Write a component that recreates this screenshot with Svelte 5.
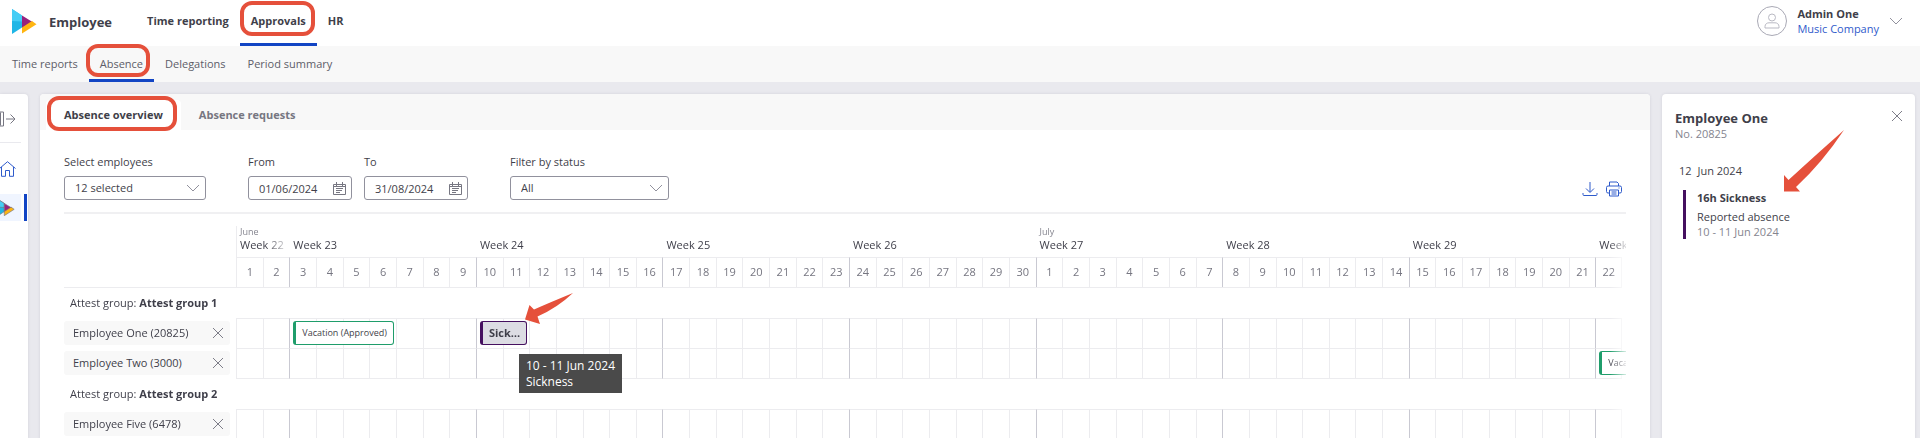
<script lang="ts">
	type Absence = { start: number; days: number; label: string; kind: string; tip?: string[] };
	type Employee = { name: string; absences: Absence[] };

	const mainNav = ['Time reporting', 'Approvals', 'HR'];
	const subNav = ['Time reports', 'Absence', 'Delegations', 'Period summary'];
	const tabs = ['Absence overview', 'Absence requests'];

	const weeks = [
		{ number: 22, days: 2, month: 'June' },
		{ number: 23, days: 7 },
		{ number: 24, days: 7 },
		{ number: 25, days: 7 },
		{ number: 26, days: 7 },
		{ number: 27, days: 7, month: 'July' },
		{ number: 28, days: 7 },
		{ number: 29, days: 7 },
		{ number: 30, days: 1 }
	];

	// 1 June to 22 July, 1 June is a Saturday
	const days = Array.from({ length: 52 }, (_, i) => ({
		index: i,
		date: i < 30 ? i + 1 : i - 29,
		monday: i % 7 === 2
	}));

	const groups: { name: string; employees: Employee[] }[] = [
		{
			name: 'Attest group 1',
			employees: [
				{
					name: 'Employee One (20825)',
					absences: [
						{ start: 2, days: 4, label: 'Vacation (Approved)', kind: 'vacation' },
						{ start: 9, days: 2, label: 'Sickness', kind: 'sickness', tip: ['10 - 11 Jun 2024', 'Sickness'] }
					]
				},
				{
					name: 'Employee Two (3000)',
					absences: [{ start: 51, days: 4, label: 'Vacation (Approved)', kind: 'vacation' }]
				}
			]
		},
		{
			name: 'Attest group 2',
			employees: [{ name: 'Employee Five (6478)', absences: [] }]
		}
	];
</script>

{#snippet logo()}
	<svg class="logo" viewBox="0 0 25 25" aria-hidden="true">
		<path d="M0 0l10 6.500v12L0 25z" fill="#1fb6e6" />
		<path d="M0 0l10 6.500v6L0 12z" fill="#45cdf5" />
		<path d="M10 6.500l10.500 6.500L10 19.500z" fill="#96227d" />
		<path d="M20 12l4.500 3.200L10 24.500v-6z" fill="#ffb511" />
	</svg>
{/snippet}

{#snippet chevron()}
	<svg class="chevron" viewBox="0 0 14 8" aria-hidden="true"><path d="M1 1l6 6 6-6" /></svg>
{/snippet}

{#snippet cross()}
	<svg class="cross" viewBox="0 0 12 12" aria-hidden="true"><path d="M1 1l10 10M11 1L1 11" /></svg>
{/snippet}

{#snippet calendar()}
	<svg class="calendar" viewBox="0 0 13 13" aria-hidden="true">
		<path d="M.5 2.500h12v10H.5zM.5 4.500h12M3.500 0v4M9.500 0v4" />
		<path d="M3 6.500h7M3 8.500h6M3 10.500h4" />
	</svg>
{/snippet}

<div class="app">
	<header class="topbar">
		{@render logo()}
		<span class="brand">Employee</span>
		<nav class="main-nav">
			{#each mainNav as item}
				<a href="#top" class:active={item === 'Approvals'}>
					{item}
					{#if item === 'Approvals'}<span class="marker"></span>{/if}
				</a>
			{/each}
		</nav>
		<button class="user">
			<span class="avatar">
				<svg viewBox="0 0 16 16" aria-hidden="true">
					<circle cx="8" cy="4.500" r="3.500" />
					<path d="M1 15v-1.500C1 11 3 9.800 5 9.800h6c2 0 4 1.200 4 3.700V15z" />
				</svg>
			</span>
			<span class="user-text">
				<strong>Admin One</strong>
				<span>Music Company</span>
			</span>
			{@render chevron()}
		</button>
	</header>

	<nav class="sub-nav">
		{#each subNav as item}
			<a href="#sub" class:active={item === 'Absence'}>
				{item}
				{#if item === 'Absence'}<span class="marker"></span>{/if}
			</a>
		{/each}
	</nav>

	<div class="layout">
		<aside class="rail">
			<button class="expand" aria-label="Expand menu">
				<svg viewBox="0 0 16 15" aria-hidden="true">
					<path d="M-3 .5h6.500v14H-3zM6 7.500h9M10.500 3l4.500 4.500-4.500 4.500" />
					<path d="M.5 1v13" />
				</svg>
			</button>
			<a href="#home" class="home" aria-label="Home">
				<svg viewBox="0 0 16 16" aria-hidden="true">
					<path d="M-.5 7.500L7.500.700l8 6.800M1.500 6v9.300h4V9.500h4v5.800h4V6" />
				</svg>
			</a>
			<a href="#employee" class="current" aria-label="Employee">{@render logo()}</a>
		</aside>

		<main class="panel">
			<div class="tabs">
				{#each tabs as tab, i}
					<button class:active={i === 0}>
						{tab}
						{#if i === 0}<span class="marker"></span>{/if}
					</button>
				{/each}
			</div>

			<div class="content">
				<div class="filters">
					<div class="field employees">
						<label for="employees">Select employees</label>
						<div class="control">
							<select id="employees"><option>12 selected</option></select>
							{@render chevron()}
						</div>
					</div>
					<div class="field date">
						<label for="from">From</label>
						<div class="control">
							<input id="from" type="text" value="01/06/2024" />
							{@render calendar()}
						</div>
					</div>
					<div class="field date to">
						<label for="to">To</label>
						<div class="control">
							<input id="to" type="text" value="31/08/2024" />
							{@render calendar()}
						</div>
					</div>
					<div class="field status">
						<label for="status">Filter by status</label>
						<div class="control">
							<select id="status"><option>All</option></select>
							{@render chevron()}
						</div>
					</div>
					<div class="actions">
						<button aria-label="Download">
							<svg viewBox="0 0 16 16" aria-hidden="true">
								<path d="M8 1v10M4 7.500l4 4 4-4M1 12v1.500q0 1 1 1h12q1 0 1-1V12" />
							</svg>
						</button>
						<button aria-label="Print">
							<svg viewBox="0 0 16 16" aria-hidden="true">
								<path d="M3.500 5V1h7.500l1.500 1.500V5M3.500 12H2q-1.500 0-1.500-1.500v-4Q.5 5 2 5h12q1.500 0 1.500 1.500v4Q15.500 12 14 12h-1.500M3.500 9h9v6h-9zM5.500 11h5M5.500 13h5M12.500 7h1" />
							</svg>
						</button>
					</div>
				</div>

				<table class="schedule">
					<thead>
						<tr class="weeks">
							<td></td>
							{#each weeks as week}
								<th scope="colgroup" colspan={week.days} style:grid-column="span {week.days}">
									<span class="month">{week.month ?? ''}</span>
									<span class="week" class:fade={week.days === 2}>Week {week.number}</span>
								</th>
							{/each}
						</tr>
						<tr class="dates">
							<td></td>
							{#each days as day}
								<th scope="col" class:monday={day.monday}>{day.date}</th>
							{/each}
						</tr>
					</thead>
					{#each groups as group}
						<tbody>
							<tr class="group">
								<th colspan="53">Attest group: <strong>{group.name}</strong></th>
							</tr>
							{#each group.employees as employee}
								<tr class="employee">
									<th scope="row">
										<span class="chip">
											{employee.name}
											<button aria-label="Remove {employee.name}">{@render cross()}</button>
										</span>
									</th>
									{#each days as day}
										<td class:monday={day.monday}>
											{#each employee.absences.filter((a) => a.start === day.index) as absence}
												<div class="absence {absence.kind}" style:--days={absence.days}>
													<button>{absence.label}</button>
													{#if absence.tip}
														<div class="tooltip" role="tooltip">
															{#each absence.tip as line}<div>{line}</div>{/each}
														</div>
														<svg class="pointer" viewBox="0 0 48 31" aria-hidden="true">
															<path d="M0 26.500L4.500 12 9 16.500Q26 9 48 0 32 15 12.500 23.500l2.500 7.500z" />
														</svg>
													{/if}
												</div>
											{/each}
										</td>
									{/each}
								</tr>
							{/each}
						</tbody>
					{/each}
				</table>
			</div>
		</main>

		<aside class="details">
			<div class="details-head">
				<div>
					<h2>Employee One</h2>
					<p class="muted">No. 20825</p>
				</div>
				<button aria-label="Close">{@render cross()}</button>
			</div>
			<h3><span>12</span> <span>Jun 2024</span></h3>
			<div class="entry">
				<strong>16h Sickness</strong>
				<p>Reported absence</p>
				<p class="muted">10 - 11 Jun 2024</p>
				<svg class="pointer" viewBox="0 0 60 62" aria-hidden="true">
					<path d="M0 61.500V45l4.500 5Q34 23 60 0 38 33 12 57l4 4.500z" />
				</svg>
			</div>
		</aside>
	</div>
</div>

<style>
	:global(body) {
		background: #e9e9ee;
		color: #3f3f4a;
		font: 11px/16px 'Open Sans', 'Noto Sans', sans-serif;
	}

	.app {
		min-height: 100vh;
		display: flex;
		flex-direction: column;
	}

	a {
		color: inherit;
		text-decoration: none;
	}

	button {
		padding: 0;
		border: 0;
		background: none;
		color: inherit;
		font: inherit;
		cursor: pointer;
	}

	h2,
	h3,
	p {
		margin: 0;
	}

	svg {
		display: block;
		flex: none;
		fill: none;
	}

	.logo {
		width: 25px;
		height: 25px;
	}

	.chevron {
		width: 14px;
		height: 8px;
		stroke: #91919d;
	}

	.cross {
		width: 12px;
		height: 12px;
		stroke: #7d7d88;
	}

	.marker {
		position: absolute;
		border: 4px solid #e5503b;
		border-radius: 12px;
		pointer-events: none;
	}

	.pointer {
		position: absolute;
		fill: #e5503b;
		z-index: 2;
	}

	.topbar {
		display: flex;
		align-items: center;
		height: 46px;
		padding: 0 17px 0 12px;
		background: #fff;
	}

	.topbar > .logo {
		margin-bottom: 4px;
	}

	.brand {
		margin: 0 24px 0 12px;
		padding-bottom: 2px;
		font-size: 13px;
		font-weight: 700;
	}

	.main-nav {
		display: flex;
		flex: 1;
		align-self: stretch;
		font-weight: 700;
	}

	.main-nav a {
		position: relative;
		padding: 13px 11px;
		border-bottom: 3px solid transparent;
	}

	.main-nav a.active,
	.sub-nav a.active {
		border-color: #1245c4;
	}

	.main-nav .marker {
		inset: 1px 2px 7px 0;
	}

	.user {
		display: flex;
		align-items: center;
		gap: 10px;
		padding-bottom: 4px;
		text-align: left;
		line-height: 15px;
	}

	.avatar {
		display: grid;
		place-items: center;
		width: 28px;
		height: 28px;
		border: 1px solid #a9a9b5;
		border-radius: 50%;
	}

	.avatar svg {
		width: 16px;
		height: 16px;
		stroke: #b9b9c3;
	}

	.user-text span {
		display: block;
		color: #2f5bcb;
	}

	.sub-nav {
		display: flex;
		height: 36px;
		padding-left: 1px;
		background: #f8f8f8;
		color: #5d5d68;
	}

	.sub-nav a {
		position: relative;
		padding: 10px 11px 7px;
		border-bottom: 3px solid transparent;
	}

	.sub-nav .marker {
		inset: -2px 4px 2px -3px;
	}

	.layout {
		display: flex;
		flex: 1;
		gap: 12px;
		padding: 12px 5px 0 0;
	}

	.rail,
	.panel,
	.details {
		background: #fff;
		border-radius: 4px 4px 0 0;
		box-shadow: 0 0 3px rgb(60 60 80 / 12%);
	}

	.rail {
		width: 28px;
		border-top-left-radius: 0;
	}

	.rail svg {
		width: 16px;
		height: 16px;
		stroke: #777782;
	}

	.expand {
		display: block;
		width: 21px;
		padding: 17px 0 15px;
		border-bottom: 1px solid #e9e9ee;
	}

	.home {
		display: block;
		padding: 18px 0 17px;
	}

	.home svg {
		stroke: #2f5bcb;
	}

	.current {
		display: block;
		width: 21px;
		padding: 5px 3px 5px 0;
		border-right: 3px solid #1245c4;
		background: linear-gradient(to right, #f0f5ff 21px, #fff 21px);
		overflow: hidden;
	}

	.current .logo {
		width: 18px;
		height: 17px;
		margin-left: -3px;
	}

	.panel {
		flex: 1;
		min-width: 0;
	}

	.tabs {
		display: flex;
		padding: 6px 6px 0;
		background: #f8f8f8;
		border-radius: 4px 4px 0 0;
		color: #767681;
		font-weight: 700;
	}

	.tabs button {
		position: relative;
		padding: 7px 18px;
		border-radius: 4px 4px 0 0;
	}

	.tabs button.active {
		background: #fff;
		color: #3f3f4a;
	}

	.tabs .marker {
		inset: -4px 4px -1px 1px;
	}

	.content {
		padding: 24px 24px 0;
	}

	.filters {
		display: flex;
		align-items: flex-end;
		gap: 42px;
		padding-bottom: 12px;
		border-bottom: 2px solid #f0f0f2;
	}

	.field label {
		display: block;
		margin-bottom: 6px;
	}

	.to {
		margin-left: -30px;
	}

	.control {
		display: flex;
		align-items: center;
		height: 22px;
		padding-right: 5px;
		border: 1px solid #91919d;
		border-radius: 3px;
	}

	.control select,
	.control input {
		flex: 1;
		min-width: 0;
		height: 100%;
		padding: 0 0 0 10px;
		border: 0;
		background: none;
		appearance: none;
		color: inherit;
		font: inherit;
		outline: 0;
	}

	.employees {
		width: 142px;
	}

	.date {
		width: 104px;
	}

	.status {
		width: 159px;
	}

	.calendar {
		width: 13px;
		height: 13px;
		stroke: #777782;
	}

	.actions {
		display: flex;
		gap: 8px;
		margin-left: auto;
		padding: 0 4px 3px 0;
	}

	.actions svg {
		width: 16px;
		height: 16px;
		stroke: #2f5bcb;
	}

	.schedule {
		display: block;
		padding: 12px 4px 0 0;
		overflow: hidden;
		mask-image: linear-gradient(to right, #000 calc(100% - 16px), rgb(0 0 0 / 20%));
	}

	thead,
	tbody {
		display: block;
	}

	tr {
		display: grid;
		grid-template-columns: 172px repeat(52, minmax(0, 1fr));
	}

	th,
	td {
		display: block;
		padding: 0;
		font-weight: 400;
		text-align: left;
	}

	.weeks th {
		height: 31px;
		padding-left: 3px;
		border-left: 1px solid transparent;
		white-space: nowrap;
	}

	.weeks th:nth-child(2) {
		border-color: #ececef;
	}

	.month {
		display: block;
		height: 12px;
		color: #85858f;
		font-size: 9px;
		line-height: 12px;
	}

	.week {
		display: block;
		line-height: 14px;
	}

	.fade {
		mask-image: linear-gradient(to right, #000 50%, rgb(0 0 0 / 30%) 90%);
	}

	.dates {
		border-bottom: 1px solid #ececef;
	}

	.dates th {
		height: 29px;
		border-top: 1px solid #ececef;
		border-left: 1px solid #ececef;
		color: #767681;
		line-height: 27px;
		text-align: center;
	}

	.dates th:last-child,
	.employee td:last-child {
		border-right: 1px solid #ececef;
	}

	.group th {
		grid-column: 1 / -1;
		height: 30px;
		padding-left: 6px;
		line-height: 30px;
	}

	.employee td {
		position: relative;
		height: 29px;
		border-top: 1px solid #ececef;
		border-left: 1px solid #ececef;
	}

	.employee:last-child td {
		border-bottom: 1px solid #ececef;
	}

	.dates .monday,
	.employee .monday {
		border-left-color: #c9c9d2;
	}

	.chip {
		display: flex;
		align-items: center;
		justify-content: space-between;
		height: 24px;
		margin: 3px 6px 0 0;
		padding: 0 6px 0 9px;
		background: #f8f8f8;
		border-radius: 3px;
	}

	.absence {
		position: absolute;
		top: 2px;
		left: 3px;
		width: calc(var(--days) * (100% + 1px) - 6px);
		z-index: 1;
	}

	.absence button {
		display: block;
		box-sizing: border-box;
		width: 100%;
		height: 24px;
		padding: 0 4px 0 6px;
		border: 1px solid #1f9d6b;
		border-left-width: 3px;
		border-radius: 3px;
		background: #fff;
		font-size: 9px;
		text-align: left;
		white-space: nowrap;
		overflow: hidden;
		text-overflow: ellipsis;
	}

	.absence.sickness button {
		border-color: #45105f;
		background: #dcdce3;
		font-size: 11px;
		font-weight: 700;
	}

	.tooltip {
		position: absolute;
		top: 33px;
		left: 39px;
		padding: 4px 7px 3px;
		background: #4a4a4a;
		color: #fff;
		font-size: 12px;
		white-space: nowrap;
	}

	.absence .pointer {
		top: -28px;
		left: 45px;
		width: 48px;
		height: 31px;
	}

	.details {
		box-sizing: border-box;
		width: 253px;
		padding: 16px 12px 0 13px;
	}

	.details-head {
		display: flex;
		justify-content: space-between;
		align-items: flex-start;
	}

	.details h2 {
		font-size: 13px;
		line-height: 16px;
	}

	.details h3 {
		margin: 21px 0 11px 4px;
		font-size: 11px;
		font-weight: 400;
	}

	.details h3 span {
		margin-right: 3px;
	}

	.muted {
		color: #85858f;
	}

	.entry {
		position: relative;
		margin-left: 8px;
		padding-left: 11px;
		border-left: 3px solid #45105f;
		line-height: 15px;
	}

	.entry strong {
		display: block;
		padding-bottom: 4px;
	}

	.entry .pointer {
		top: -60px;
		left: 98px;
		width: 60px;
		height: 62px;
	}
</style>
